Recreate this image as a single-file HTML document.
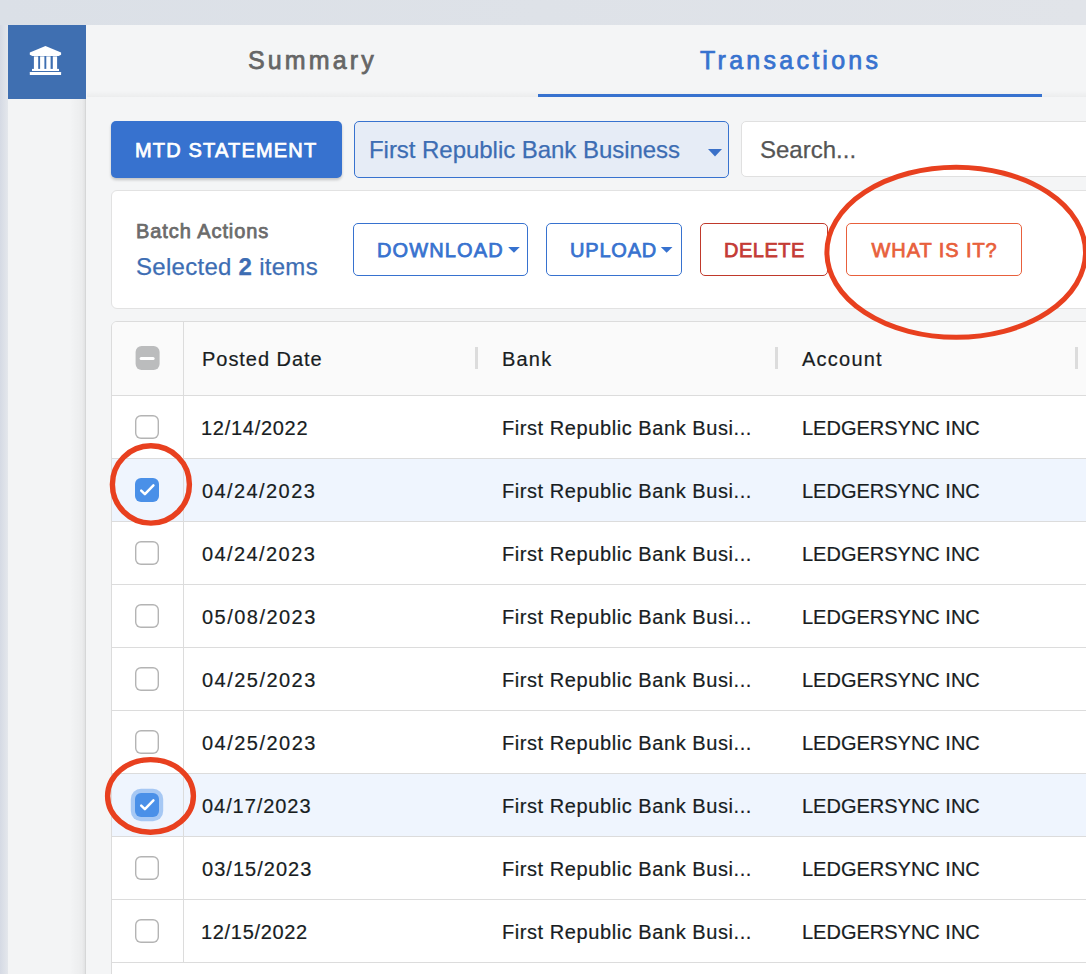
<!DOCTYPE html>
<html lang="en">
<head>
<meta charset="utf-8">
<title>Transactions</title>
<style>
*{box-sizing:border-box;margin:0;padding:0}
html,body{width:1086px;height:974px;overflow:hidden}
body{background:linear-gradient(to right,#dbe0e7,#e1e4e9);font-family:"Liberation Sans",sans-serif;position:relative;color:#1b1f23}
.abs{position:absolute}
.t{position:absolute;white-space:nowrap;line-height:1}
#side{left:8px;top:25px;width:79px;height:949px;background:#f3f4f5}
#sideblue{left:8px;top:25px;width:78px;height:74px;background:#3f6fb1}
#main{left:86px;top:25px;width:1000px;height:949px;background:#f4f5f6}
#mainsh{left:70px;top:25px;width:17px;height:949px;background:linear-gradient(to right,rgba(0,0,0,0),rgba(0,0,0,.03) 70%,rgba(0,0,0,.07) 88%,rgba(0,0,0,.26))}
#tabline{left:538px;top:94px;width:504px;height:3px;background:#3772cf}
#tabshadow{left:87px;top:91px;width:999px;height:6px;background:linear-gradient(to bottom,rgba(0,0,0,0),rgba(0,0,0,.035))}
.btn{position:absolute;border-radius:5px;border:1px solid;background:#fff}
#mtd{left:111px;top:121px;width:231px;height:57px;background:#3772cf;border:none;box-shadow:0 2px 3px rgba(0,0,0,.2)}
#sel{left:354px;top:121px;width:375px;height:57px;background:#e6ecf6;border-color:#3772cf}
#search{left:741px;top:121px;width:360px;height:56px;background:#fff;border-color:#e0e0e0}
#batch{left:111px;top:190px;width:990px;height:119px;background:#fff;border:1px solid #e2e2e2;border-radius:6px}
#table{left:111px;top:321px;width:990px;height:660px;background:#fff;border:1px solid #dcdcdc;border-radius:6px 0 0 0;overflow:hidden}
#thead{left:0;top:0;width:990px;height:74px;background:#fafafa;border-bottom:1px solid #dcdcdc}
.row{position:absolute;left:0;width:990px;height:63px;border-bottom:1px solid #dcdcdc;background:#fff}
.row.s{background:#eff5fe}
#vline{left:71px;top:0;width:1px;height:641px;background:#dcdcdc}
.sep{position:absolute;top:25px;width:3px;height:22px;background:#dcdcdc}
.cb{position:absolute;left:23px;width:24px;height:24px;border-radius:6px;box-shadow:inset 0 0 0 1.4px #b4b4b4;background:#fff}
.cb.on{background:#4a90e8;box-shadow:none}
.cb.on.foc{box-shadow:0 0 0 4.2px #a6c8f4}
.cb svg{display:block}
.cb.ind{background:#bbbcbd;box-shadow:none;transform:translateX(.6px)}
.c{font-size:20px;color:#181d1f;-webkit-text-stroke:.2px}
.bk{letter-spacing:.57px}
</style>
</head>
<body>
<div class="abs" style="left:0;top:25px;width:8px;height:949px;background:linear-gradient(to right,#d5dae4,#e4e7ec)"></div>
<div class="abs" id="side"></div>
<div class="abs" id="mainsh"></div>
<div class="abs" id="sideblue"></div>
<div class="abs" id="main"></div>
<svg class="abs" style="left:20px;top:38px" width="52" height="46" viewBox="20 38 52 46"><g fill="#fff"><path d="M45.450 46 L61.100 52.500 V54.700 L58.600 55.900 H32.300 L29.800 54.700 V52.500 Z"/><rect x="33.900" y="56.400" width="4.300" height="12.800"/><rect x="40.100" y="56.400" width="4.300" height="12.800"/><rect x="46.300" y="56.400" width="4.300" height="12.800"/><rect x="52.800" y="56.400" width="4.300" height="12.800"/><rect x="32" y="68.900" width="27" height="2.100"/><rect x="29.800" y="72" width="31.300" height="3.100" rx=".4"/></g></svg>

<div class="t" id="tSummary" style="left:248px;top:48px;font-size:25px;color:#666;font-weight:normal;-webkit-text-stroke:0.75px;letter-spacing:3.13px">Summary</div>
<div class="t" id="tTrans" style="left:700px;top:48px;font-size:25px;color:#3772cf;font-weight:normal;-webkit-text-stroke:0.75px;letter-spacing:3.25px">Transactions</div>
<div class="abs" id="tabshadow"></div>
<div class="abs" id="tabline"></div>

<div class="btn" id="mtd"></div>
<div class="t" id="tMtd" style="left:135px;top:139px;font-size:20px;color:#fff;font-weight:normal;-webkit-text-stroke:0.75px;letter-spacing:1.18px;transform:translateY(.5px)">MTD STATEMENT</div>
<div class="btn" id="sel"></div>
<div class="t" id="tSel" style="left:369px;letter-spacing:-.04px;top:138px;font-size:24px;color:#3d6db3;-webkit-text-stroke:.25px">First Republic Bank Business</div>
<svg class="abs" style="left:707px;top:148px" width="16" height="9" viewBox="0 0 16 9"><path d="M1 1 H15 L8 8.500 Z" fill="#3a70c8"/></svg>
<div class="btn" id="search"></div>
<div class="t" id="tSearch" style="left:760px;top:138px;font-size:24px;color:#555;-webkit-text-stroke:.25px">Search...</div>

<div class="abs" id="batch"></div>
<div class="t" id="tBatch" style="left:136px;top:220px;font-size:20px;color:#6b6b6b;font-weight:normal;-webkit-text-stroke:0.75px;letter-spacing:0.93px;transform:translateY(.5px)">Batch Actions</div>
<div class="t" id="tSelected" style="left:136px;top:255px;font-size:24px;color:#3d6db3;letter-spacing:0.28px;-webkit-text-stroke:.25px">Selected <b>2</b> items</div>

<div class="btn" style="left:353px;top:223px;width:175px;height:53px;border-color:#3772cf"></div>
<div class="t" id="tDl" style="left:377px;top:239px;font-size:20px;color:#3772cf;font-weight:normal;-webkit-text-stroke:0.75px;letter-spacing:1.13px;transform:translateY(.5px)">DOWNLOAD</div>
<svg class="abs" style="left:508px;top:246px" width="13" height="8" viewBox="0 0 13 8"><path d="M0.100 0.900 H11.800 L5.950 6.700 Z" fill="#3772cf"/></svg>
<div class="btn" style="left:546px;top:223px;width:136px;height:53px;border-color:#3772cf"></div>
<div class="t" id="tUp" style="left:570px;top:239px;font-size:20px;color:#3772cf;font-weight:normal;-webkit-text-stroke:0.75px;letter-spacing:0.8px;transform:translateY(.5px)">UPLOAD</div>
<svg class="abs" style="left:660px;top:246px" width="14" height="8" viewBox="0 0 14 8"><path d="M0.800 0.900 H12.500 L6.650 6.700 Z" fill="#3772cf"/></svg>
<div class="btn" style="left:700px;top:223px;width:128px;height:53px;border-color:#c0392b"></div>
<div class="t" id="tDel" style="left:724px;top:239px;font-size:20px;color:#c43b34;font-weight:normal;-webkit-text-stroke:0.75px;letter-spacing:0.49px;transform:translateY(.5px)">DELETE</div>
<div class="btn" style="left:846px;top:223px;width:176px;height:53px;border-color:#e8603c"></div>
<div class="t" id="tWhat" style="left:871.5px;top:239px;font-size:20px;color:#e8603c;font-weight:normal;-webkit-text-stroke:0.75px;letter-spacing:0.92px;transform:translateY(.5px)">WHAT IS IT?</div>

<div class="abs" id="table">
  <div class="abs" id="thead">
    <div class="cb ind" style="top:24px"><div style="position:absolute;left:4.300px;top:10.700px;width:15.200px;height:3.200px;background:#fff;border-radius:1.600px"></div></div>
    <div class="t c" id="hPosted" style="left:90px;top:27px;letter-spacing:0.96px">Posted Date</div>
    <div class="sep" style="left:363px"></div>
    <div class="t c" id="hBank" style="left:390px;top:27px;letter-spacing:1.2px">Bank</div>
    <div class="sep" style="left:663px"></div>
    <div class="t c" id="hAccount" style="left:690px;top:27px;letter-spacing:1.23px">Account</div>
    <div class="sep" style="left:963px"></div>
  </div>
  <div class="row" style="top:74px"><div class="cb" style="top:19px"></div><div class="t c d" id="d0" style="left:89px;top:22px;letter-spacing:0.72px">12/14/2022</div><div class="t c bk" id="bk0" style="left:390px;top:22px">First Republic Bank Busi...</div><div class="t c ac" id="ac0" style="left:690px;top:22px">LEDGERSYNC INC</div></div>
  <div class="row s" style="top:137px"><div class="cb on" style="top:19px"><svg width="24" height="24" viewBox="0 0 24 24"><path d="M6.200 12.600 L9.900 16.100 L18.400 7.400" fill="none" stroke="#fff" stroke-width="2.500" stroke-linecap="round" stroke-linejoin="round"/></svg></div><div class="t c d" id="d1" style="left:90px;top:22px;letter-spacing:1.41px">04/24/2023</div><div class="t c bk" style="left:390px;top:22px">First Republic Bank Busi...</div><div class="t c ac" style="left:690px;top:22px">LEDGERSYNC INC</div></div>
  <div class="row" style="top:200px"><div class="cb" style="top:19px"></div><div class="t c d" id="d2" style="left:90px;top:22px;letter-spacing:1.41px">04/24/2023</div><div class="t c bk" style="left:390px;top:22px">First Republic Bank Busi...</div><div class="t c ac" style="left:690px;top:22px">LEDGERSYNC INC</div></div>
  <div class="row" style="top:263px"><div class="cb" style="top:19px"></div><div class="t c d" id="d3" style="left:90px;top:22px;letter-spacing:1.47px">05/08/2023</div><div class="t c bk" style="left:390px;top:22px">First Republic Bank Busi...</div><div class="t c ac" style="left:690px;top:22px">LEDGERSYNC INC</div></div>
  <div class="row" style="top:326px"><div class="cb" style="top:19px"></div><div class="t c d" id="d4" style="left:90px;top:22px;letter-spacing:1.47px">04/25/2023</div><div class="t c bk" style="left:390px;top:22px">First Republic Bank Busi...</div><div class="t c ac" style="left:690px;top:22px">LEDGERSYNC INC</div></div>
  <div class="row" style="top:389px"><div class="cb" style="top:19px"></div><div class="t c d" id="d5" style="left:90px;top:22px;letter-spacing:1.48px">04/25/2023</div><div class="t c bk" style="left:390px;top:22px">First Republic Bank Busi...</div><div class="t c ac" style="left:690px;top:22px">LEDGERSYNC INC</div></div>
  <div class="row s" style="top:452px"><div class="cb on foc" style="top:19px"><svg width="24" height="24" viewBox="0 0 24 24"><path d="M6.200 12.600 L9.900 16.100 L18.400 7.400" fill="none" stroke="#fff" stroke-width="2.500" stroke-linecap="round" stroke-linejoin="round"/></svg></div><div class="t c d" id="d6" style="left:90px;top:22px;letter-spacing:0.94px">04/17/2023</div><div class="t c bk" style="left:390px;top:22px">First Republic Bank Busi...</div><div class="t c ac" style="left:690px;top:22px">LEDGERSYNC INC</div></div>
  <div class="row" style="top:515px"><div class="cb" style="top:19px"></div><div class="t c d" id="d7" style="left:90px;top:22px;letter-spacing:1.03px">03/15/2023</div><div class="t c bk" style="left:390px;top:22px">First Republic Bank Busi...</div><div class="t c ac" style="left:690px;top:22px">LEDGERSYNC INC</div></div>
  <div class="row" style="top:578px"><div class="cb" style="top:19px"></div><div class="t c d" id="d8" style="left:89px;top:22px;letter-spacing:0.68px">12/15/2022</div><div class="t c bk" style="left:390px;top:22px">First Republic Bank Busi...</div><div class="t c ac" style="left:690px;top:22px">LEDGERSYNC INC</div></div>
  <div class="abs" id="vline"></div>
</div>

<svg class="abs" style="left:0;top:0" width="1086" height="974" viewBox="0 0 1086 974" fill="none" stroke="#e8401f" stroke-width="4.5">
<ellipse cx="956.200" cy="252.300" rx="129.300" ry="85" stroke-width="5"/>
<ellipse cx="150.900" cy="484.400" rx="38.500" ry="38.700" stroke-width="5.400"/>
<ellipse cx="150.500" cy="795.900" rx="42.900" ry="36.300" stroke-width="5.400"/>
</svg>
</body>
</html>
